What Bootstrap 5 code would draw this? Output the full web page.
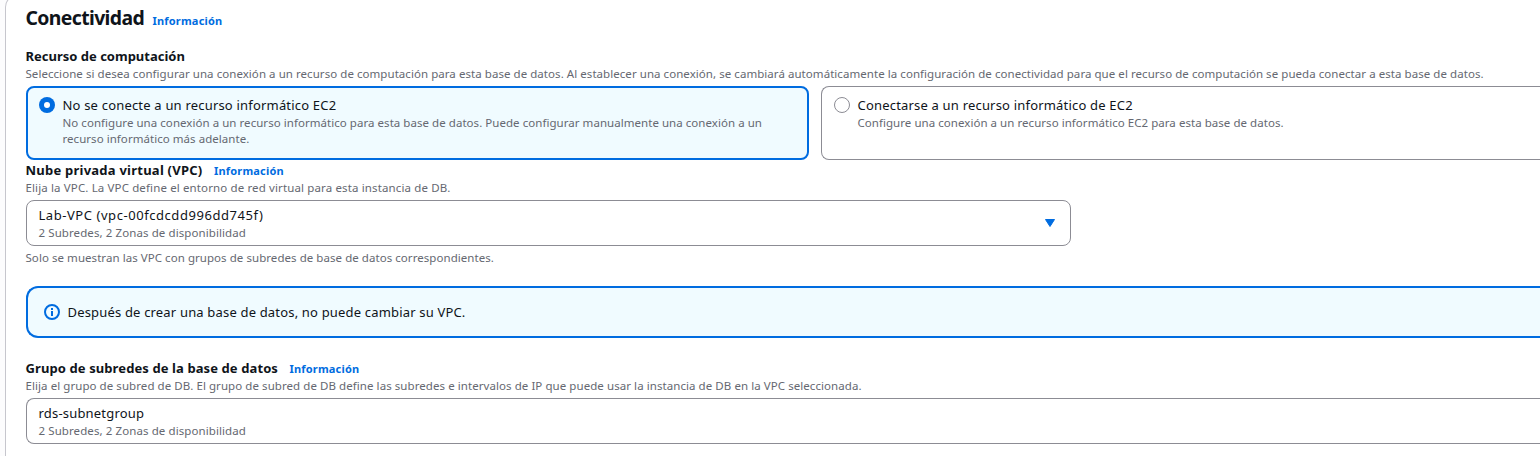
<!DOCTYPE html>
<html lang="es">
<head>
<meta charset="utf-8">
<meta name="viewport" content="width=device-width, initial-scale=1">
<title>Conectividad</title>
<link rel="stylesheet" href="https://cdn.jsdelivr.net/npm/bootstrap@5.3.0/dist/css/bootstrap.min.css">
<style>
  :root { --ink: #0f141a; --muted: #656871; --blue: #006ce0; --line: #8c8c94; --tint: #f0fbff; }
  body { font-family: "Noto Sans", "Open Sans", sans-serif; font-size: 13px; line-height: 18px; color: var(--ink); background: #fcfcfd; overflow: hidden; height: 456px; }
  .panel { height: 476px; margin: -5px 0 0 5px; padding: 10px 0 0 20px; border: 1px solid #c6c6cd; border-right: 0; border-radius: 12px 0 0 0; background: #fff; }
  .panel-title { font-size: 19.4px; line-height: 24px; font-weight: 700; letter-spacing: -.62px; }
  .info { font-size: 11px; line-height: 18px; font-weight: 700; letter-spacing: .19px; color: var(--blue); text-decoration: none; }
  .title-info { margin-left: 9px; }
  .label-row { height: 18px; }
  .field-label { font-weight: 700; }
  .vpc-label { letter-spacing: .237px; }
  .group-label { letter-spacing: .098px; }
  .hint { font-size: 11.5px; line-height: 16px; color: var(--muted); letter-spacing: .053px; margin-top: 1px; white-space: nowrap; }
  .hint, .field-label, .body-text, .info, .panel-title { text-indent: -.5px; }
  .vpc-hint { letter-spacing: .13px; }
  .group-hint { letter-spacing: .066px; }
  .after-hint { margin-top: 4px; }
  .tiles { gap: 12px; }
  .tile { height: 74px; border: 1px solid var(--line); border-radius: 8px; padding: 9px 12px; gap: 8px; }
  .tile.selected { width: 783px; flex: none; border: 2px solid var(--blue); background: var(--tint); padding: 8px 11px; }
  .tile .hint { letter-spacing: .046px; }
  .tile svg { margin-top: 1px; }
  .bleed { border-right: 0 !important; border-top-right-radius: 0 !important; border-bottom-right-radius: 0 !important; }
  .tile svg, .notice svg { flex: none; }
  .body-text { letter-spacing: .19px; white-space: nowrap; }
  .picker { height: 46px; border: 1px solid var(--line); border-radius: 8px; padding: 5px 15px 0 12px; margin-top: 4px; }
  .picker.medium { width: 1045px; }
  .picker svg { margin-top: 13px; }
  .picker .hint { letter-spacing: .09px; }
  .vpc-id { letter-spacing: .555px; }
  .notice { height: 52px; border: 2px solid var(--blue); border-radius: 12px; background: var(--tint); padding: 0 16px; gap: 8px; margin-top: 20px; }
  .notice .body-text { letter-spacing: .175px; }
  .compute { margin-top: 17px; }
  .vpc { margin-top: 1px; }
  .subnets { margin-top: 21px; }
</style>
</head>
<body>
<main class="panel">
  <header class="d-flex align-items-baseline">
    <h2 class="panel-title mb-0">Conectividad</h2>
    <a class="info title-info" href="#">Información</a>
  </header>

  <section class="compute">
    <div class="field-label">Recurso de computación</div>
    <div class="hint">Seleccione si desea configurar una conexión a un recurso de computación para esta base de datos. Al establecer una conexión, se cambiará automáticamente la configuración de conectividad para que el recurso de computación se pueda conectar a esta base de datos.</div>
    <div class="tiles d-flex mt-1">
      <label class="tile selected d-flex">
        <svg width="16" height="16" viewBox="0 0 16 16"><circle cx="8" cy="8" r="8" fill="#006ce0"/><circle cx="8" cy="8" r="3" fill="#fff"/></svg>
        <div>
          <div class="body-text">No se conecte a un recurso informático EC2</div>
          <div class="hint">No configure una conexión a un recurso informático para esta base de datos. Puede configurar manualmente una conexión a un</div>
          <div class="hint mt-0">recurso informático más adelante.</div>
        </div>
      </label>
      <label class="tile bleed flex-grow-1 d-flex">
        <svg width="16" height="16" viewBox="0 0 16 16"><circle cx="8" cy="8" r="7.5" fill="#fff" stroke="#8c8c94"/></svg>
        <div>
          <div class="body-text">Conectarse a un recurso informático de EC2</div>
          <div class="hint">Configure una conexión a un recurso informático EC2 para esta base de datos.</div>
        </div>
      </label>
    </div>
  </section>

  <section class="vpc">
    <div class="label-row d-flex align-items-baseline gap-2">
      <span class="field-label vpc-label">Nube privada virtual (VPC)</span>
      <a class="info ms-1" href="#">Información</a>
    </div>
    <div class="hint vpc-hint">Elija la VPC. La VPC define el entorno de red virtual para esta instancia de DB.</div>
    <div class="picker medium d-flex justify-content-between">
      <div>
        <div class="body-text vpc-id">Lab-VPC (vpc-00fcdcdd996dd745f)</div>
        <div class="hint">2 Subredes, 2 Zonas de disponibilidad</div>
      </div>
      <svg width="10" height="8" viewBox="0 0 10 8"><path d="M.5.5h9L5 7.500z" fill="#006ce0" stroke="#006ce0" stroke-linejoin="round"/></svg>
    </div>
    <div class="hint after-hint">Solo se muestran las VPC con grupos de subredes de base de datos correspondientes.</div>
  </section>

  <div class="notice bleed d-flex align-items-center" role="status">
    <svg width="16" height="16" viewBox="0 0 16 16"><circle cx="8" cy="8" r="7" fill="none" stroke="#006ce0" stroke-width="2"/><path d="M7 4h2v2H7zM7 7h2v5H7z" fill="#006ce0"/></svg>
    <span class="body-text">Después de crear una base de datos, no puede cambiar su VPC.</span>
  </div>

  <section class="subnets">
    <div class="label-row d-flex align-items-baseline gap-2">
      <span class="field-label group-label">Grupo de subredes de la base de datos</span>
      <a class="info ms-1" href="#">Información</a>
    </div>
    <div class="hint group-hint">Elija el grupo de subred de DB. El grupo de subred de DB define las subredes e intervalos de IP que puede usar la instancia de DB en la VPC seleccionada.</div>
    <div class="picker bleed">
      <div class="body-text">rds-subnetgroup</div>
      <div class="hint">2 Subredes, 2 Zonas de disponibilidad</div>
    </div>
  </section>
</main>
<script src="https://cdn.jsdelivr.net/npm/bootstrap@5.3.0/dist/js/bootstrap.bundle.min.js"></script>
</body>
</html>
